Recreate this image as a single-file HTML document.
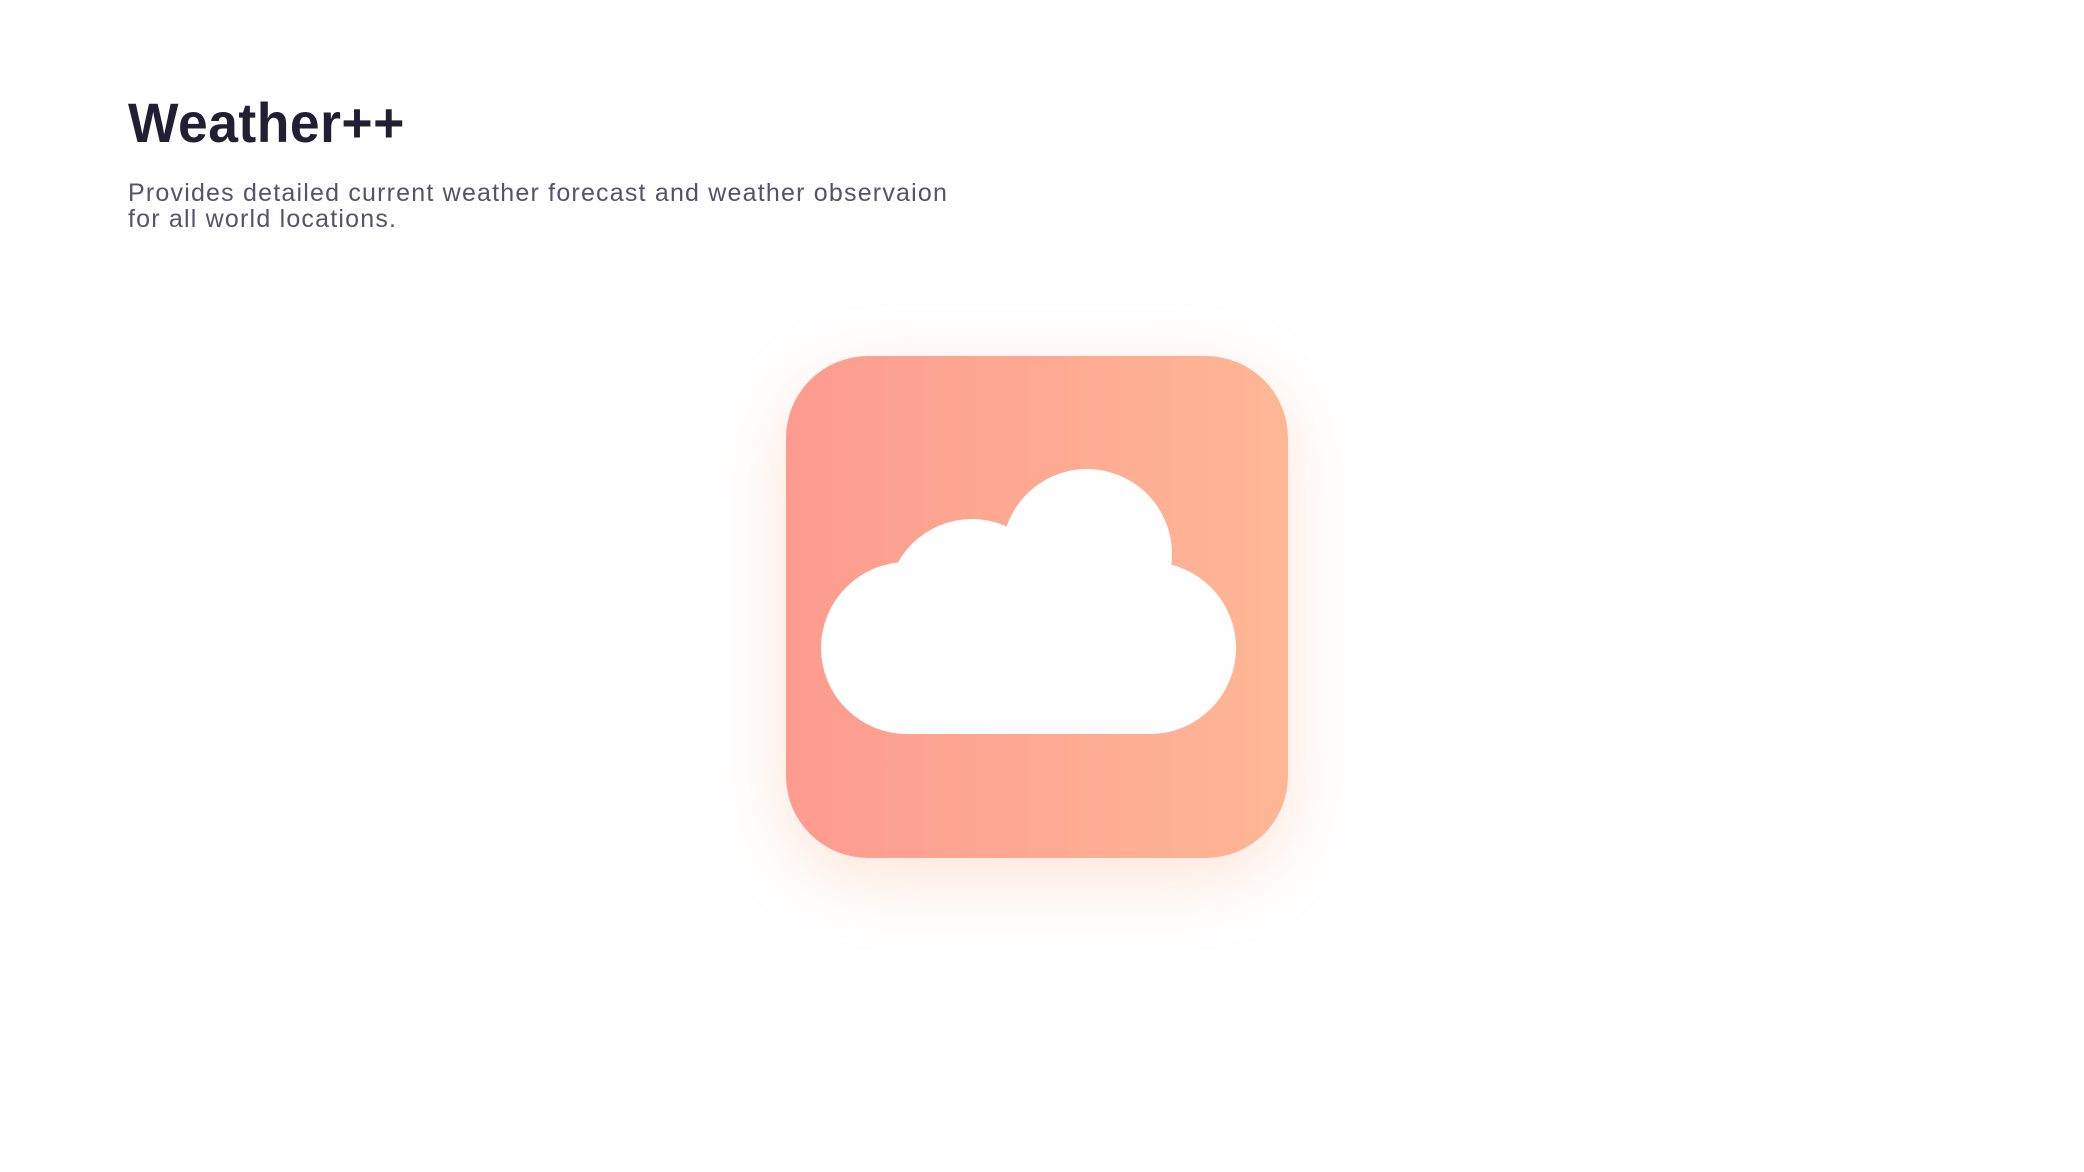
<!DOCTYPE html>
<html><head><style>
html,body{margin:0;padding:0;background:#fff;width:2084px;height:1172px;overflow:hidden;position:relative}
h1{position:absolute;left:128px;top:95px;margin:0;font:bold 56px/1 "Liberation Sans",sans-serif;color:#231f33;letter-spacing:0.5px;transform:scaleX(0.955);transform-origin:left}
p{position:absolute;left:128px;top:180px;margin:0;font:300 25px/26px "Liberation Sans",sans-serif;color:#55536a;width:1000px;letter-spacing:1.2px}
.box{position:absolute;left:786px;top:356px;width:502px;height:502px;border-radius:82px;background:linear-gradient(90deg,#fd9b8f,#feb795);box-shadow:0 20px 70px rgba(254,170,140,0.32)}
svg{position:absolute;left:0;top:0}
</style></head><body>
<h1>Weather++</h1>
<p>Provides detailed current weather forecast and weather observaion<br>for all world locations.</p>
<div class="box"></div>
<svg width="2084" height="1172">
<g fill="#fff">
<circle cx="907" cy="648" r="86"/>
<circle cx="1150" cy="648" r="86"/>
<circle cx="1087" cy="554" r="85"/>
<circle cx="972" cy="604" r="85"/>
<rect x="907" y="560" width="243" height="174"/>
</g>
</svg>
</body></html>
